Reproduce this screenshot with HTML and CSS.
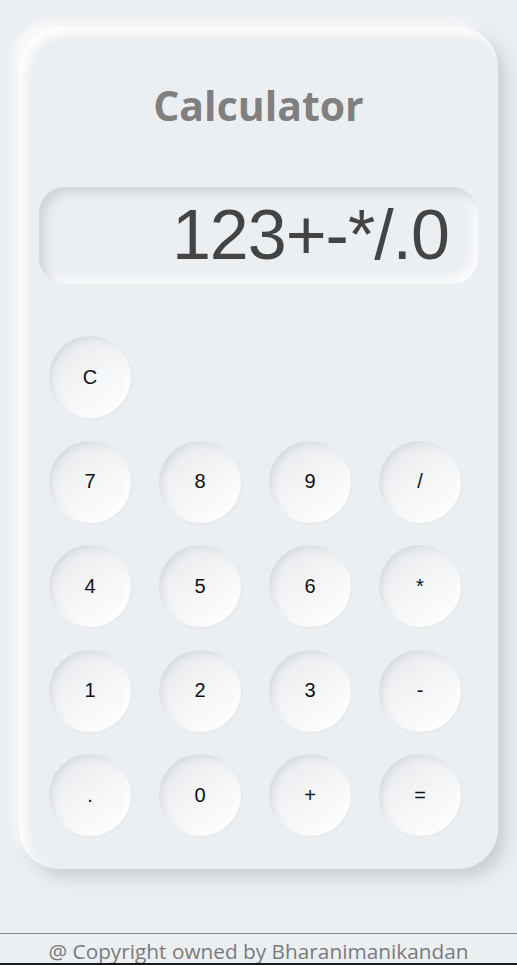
FILE: index.html
```html
<!DOCTYPE html>
<html lang="en">
<head>
<meta charset="utf-8">
<title>Calculator</title>
<link rel="stylesheet" href="styles.css">
</head>
<body>
<main class="calc">
  <h1 class="calc-title">Calculator</h1>
  <div class="display">123+-*/.0</div>
  <div class="keys">
    <button class="key">C</button>
    <span class="key-empty"></span>
    <span class="key-empty"></span>
    <span class="key-empty"></span>
    <button class="key">7</button>
    <button class="key">8</button>
    <button class="key">9</button>
    <button class="key">/</button>
    <button class="key">4</button>
    <button class="key">5</button>
    <button class="key">6</button>
    <button class="key">*</button>
    <button class="key">1</button>
    <button class="key">2</button>
    <button class="key">3</button>
    <button class="key">-</button>
    <button class="key">.</button>
    <button class="key">0</button>
    <button class="key">+</button>
    <button class="key">=</button>
  </div>
</main>
<footer class="footer">@ Copyright owned by Bharanimanikandan</footer>
</body>
</html>
```
FILE: styles.css
```css
html, body {
  margin: 0;
  padding: 0;
}
body {
  background: #eceff2;
  font-family: "Liberation Sans", Arial, sans-serif;
}
.calc {
  box-sizing: border-box;
  width: 479px;
  height: 842px;
  margin: 27px auto 0;
  padding: 20px 20px 33px;
  border-radius: 40px;
  background: #eceff2;
  box-shadow: 8px 8px 16px rgba(120, 128, 140, 0.3),
              -6px -6px 12px rgba(255, 255, 255, 0.8),
              inset 7px 7px 10px rgba(255, 255, 255, 0.9);
}
.calc-title {
  margin: 33px 0 57px;
  height: 50px;
  line-height: 50px;
  font-family: "Open Sans", "Noto Sans", sans-serif;
  font-weight: 700;
  font-size: 41px;
  color: #808080;
  text-align: center;
}
.display {
  box-sizing: border-box;
  height: 97px;
  line-height: 97px;
  padding: 0 29px 0 0;
  border-radius: 26px;
  background: #eceff2;
  box-shadow: inset 6px 6px 10px #d2d5d9,
              inset -6px -6px 10px #fafbfc;
  text-align: right;
  font-size: 70px;
  letter-spacing: -1px;
  color: #444444;
}
.keys {
  margin: 52px 0 0 10px;
  display: grid;
  grid-template-columns: repeat(4, 82px);
  grid-auto-rows: 82px;
  column-gap: 28px;
  row-gap: 22.5px;
}
.key {
  width: 82px;
  height: 82px;
  border: none;
  border-radius: 50%;
  padding: 0;
  background: linear-gradient(145deg, #e5e8eb 0%, #f5f6f8 55%, #ffffff 100%);
  box-shadow: inset 3px 3px 6px rgba(200, 204, 210, 0.55),
              inset -3px -3px 6px rgba(255, 255, 255, 0.9),
              1px 1px 3px rgba(0, 0, 0, 0.04);
  font-family: "Liberation Sans", Arial, sans-serif;
  font-size: 20px;
  color: #111111;
}
.footer {
  box-sizing: border-box;
  margin-top: 64px;
  height: 32px;
  overflow: hidden;
  border-top: 1px solid #8a8a8a;
  border-bottom: 2px solid #1a1a1a;
  font-family: "Open Sans", "Noto Sans", sans-serif;
  font-size: 20.8px;
  line-height: 34px;
  color: #7a7a7a;
  text-align: center;
}
```
